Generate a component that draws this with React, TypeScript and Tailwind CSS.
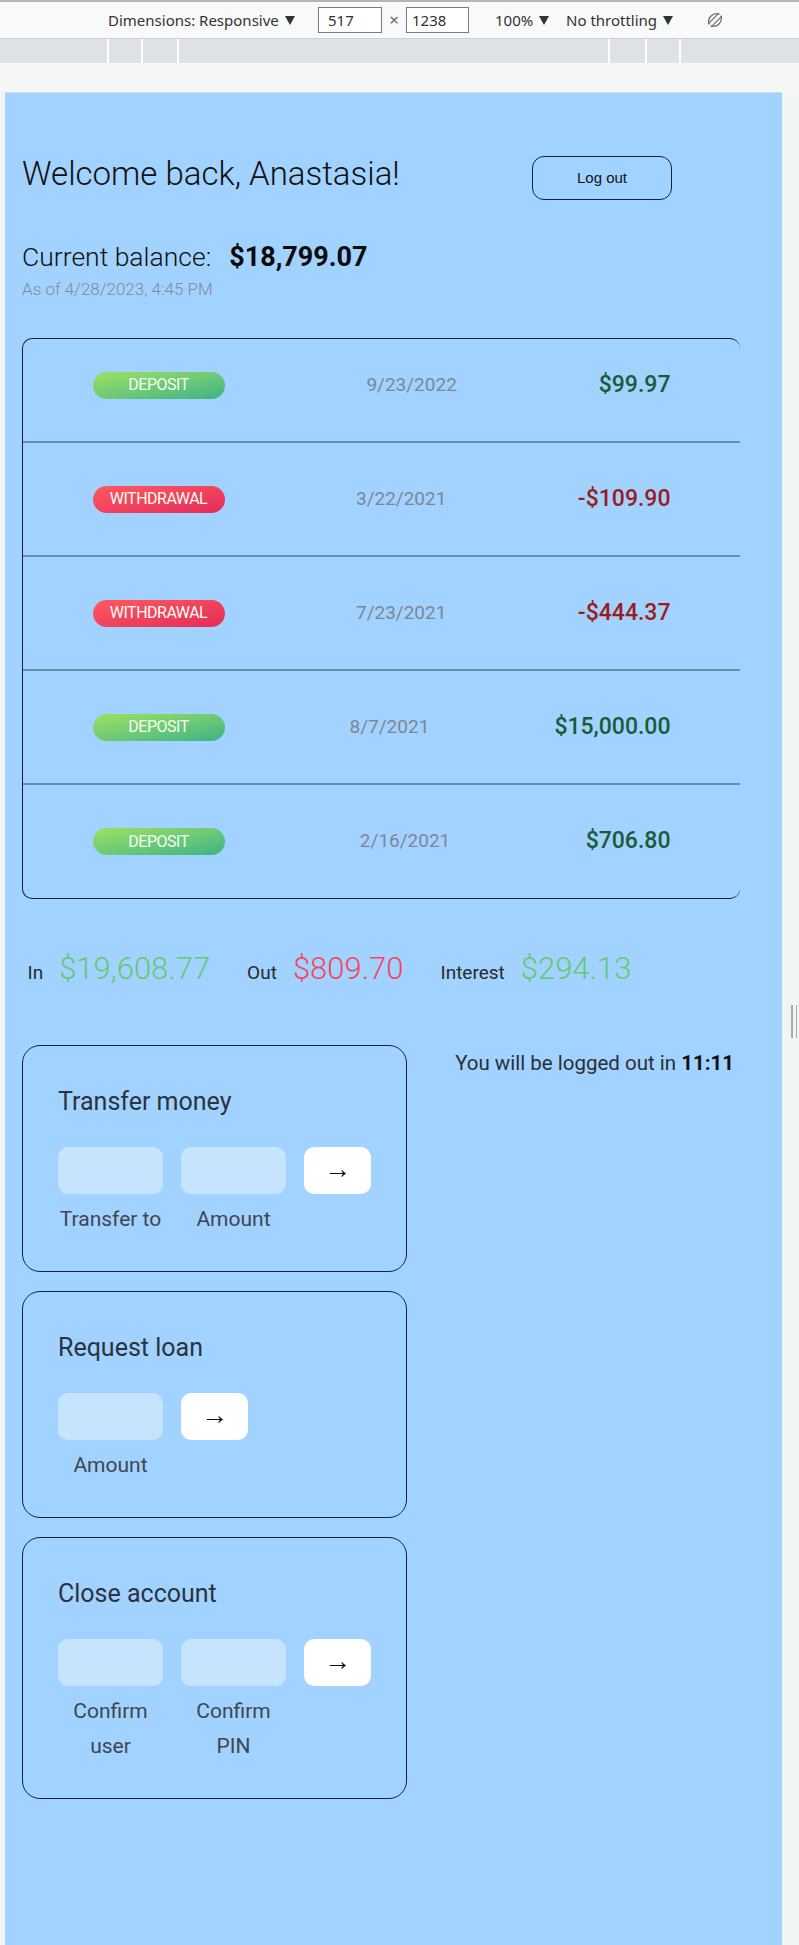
import React from "react";

type Mov = { type: "deposit" | "withdrawal"; date: string; value: string };

const movements: Mov[] = [
  { type: "deposit", date: "9/23/2022", value: "$99.97" },
  { type: "withdrawal", date: "3/22/2021", value: "-$109.90" },
  { type: "withdrawal", date: "7/23/2021", value: "-$444.37" },
  { type: "deposit", date: "8/7/2021", value: "$15,000.00" },
  { type: "deposit", date: "2/16/2021", value: "$706.80" },
];

function Tri() {
  return (
    <svg width="10" height="9" viewBox="0 0 10 9" className="shrink-0">
      <polygon points="0,0 10,0 5,9" fill="#333" />
    </svg>
  );
}

function Toolbar() {
  return (
    <div className="h-[36px] bg-[#f8f9f9] flex items-center text-[15px] text-[#333] font-['Noto_Sans',sans-serif]">
      <div className="w-[108px] shrink-0" />
      <div className="w-[210px] shrink-0 flex items-center">
        <span>Dimensions: Responsive</span>
        <span className="ml-[6px] flex items-center">
          <Tri />
        </span>
      </div>
      <div className="w-[64px] h-[26px] shrink-0 border border-[#7a7a7a] bg-white flex items-center pl-[9px]">517</div>
      <div className="w-[24px] shrink-0 flex justify-center text-[#666] text-[17px]">×</div>
      <div className="w-[63px] h-[26px] shrink-0 border border-[#7a7a7a] bg-white flex items-center pl-[5px]">1238</div>
      <div className="w-[26px] shrink-0" />
      <div className="w-[71px] shrink-0 flex items-center">
        <span>100%</span>
        <span className="ml-[6px] flex items-center">
          <Tri />
        </span>
      </div>
      <div className="w-[139px] shrink-0 flex items-center">
        <span>No throttling</span>
        <span className="ml-[6px] flex items-center">
          <Tri />
        </span>
      </div>
      <svg width="20" height="20" viewBox="0 0 20 20" fill="none" stroke="#6b6b6b" strokeWidth="1.2">
        <path d="M4.2 14.5 A8 8 0 0 1 14.5 4.2" />
        <path d="M15.8 5.5 A8 8 0 0 1 5.5 15.8" />
        <path d="M3.2 13.8 L13.8 3.2" />
        <path d="M6.2 16.8 L16.8 6.2" />
      </svg>
    </div>
  );
}

function Ruler() {
  return (
    <div className="h-[24px] bg-[#dee1e5] flex">
      <div className="w-[107px] shrink-0" />
      <div className="w-[2px] bg-white shrink-0" />
      <div className="w-[32px] shrink-0" />
      <div className="w-[2px] bg-white shrink-0" />
      <div className="w-[34px] shrink-0" />
      <div className="w-[2px] bg-white shrink-0" />
      <div className="w-[429px] shrink-0" />
      <div className="w-[2px] bg-white shrink-0" />
      <div className="w-[35px] shrink-0" />
      <div className="w-[2px] bg-white shrink-0" />
      <div className="w-[32px] shrink-0" />
      <div className="w-[2px] bg-white shrink-0" />
    </div>
  );
}

function Badge({ type }: { type: Mov["type"] }) {
  const cls =
    type === "deposit"
      ? "bg-linear-to-tl from-[#39b385] to-[#9be15d]"
      : "bg-linear-to-tl from-[#e52a5a] to-[#ff585f]";
  return (
    <div
      className={`w-[132px] h-[27px] rounded-full flex items-center justify-center text-[#f4fff4] text-[16px] tracking-[-0.5px] uppercase ${cls}`}
    >
      {type}
    </div>
  );
}

function Card({
  title,
  cols,
  children,
}: {
  title: string;
  cols: "transfer" | "loan";
  children: React.ReactNode;
}) {
  return (
    <div className="border-[1.5px] border-[#18212f] rounded-[18px] pt-[41px] pb-[34px] pl-[35px]">
      <h2 className="text-[25px] leading-[30px] text-[#2b3340] mb-[30px]">{title}</h2>
      <div
        className={`grid gap-x-[18px] gap-y-[8px] ${
          cols === "transfer" ? "grid-cols-[105px_105px_67px]" : "grid-cols-[105px_67px_105px]"
        }`}
      >
        {children}
      </div>
    </div>
  );
}

function Input() {
  return <div className="h-[47px] rounded-[10px] bg-white/40" />;
}

function Btn() {
  return (
    <div className="h-[47px] rounded-[10px] bg-white flex items-center justify-center text-[27px] text-[#111] leading-none pb-[3px]">
      →
    </div>
  );
}

function Label({ children, nowrap }: { children: React.ReactNode; nowrap?: boolean }) {
  return (
    <div className={`text-[21px] leading-[35px] text-center text-[#3f4650] ${nowrap ? "whitespace-nowrap" : ""}`}>
      {children}
    </div>
  );
}

export default function App() {
  return (
    <div className="relative w-[799px] h-[1945px] overflow-hidden bg-[#f3f4f5] font-['Roboto',sans-serif]">
      <div className="h-[2px] bg-[#b4b5b7]" />
      <Toolbar />
      <div className="h-[1px] bg-[#cfd1d4]" />
      <Ruler />
      <div className="h-[29px] bg-[#f5f6f6]" />
      <div className="ml-[5px] w-[777px] h-[1853px] bg-[#a2d2ff] pl-[17px] border-t border-[#d5dbe2]">
        {/* header */}
        <div className="flex items-start pt-[61px]">
          <h1 className="w-[510px] shrink-0 text-[33px] leading-[40px] font-light text-[#111]">
            Welcome back, Anastasia!
          </h1>
          <button className="mt-[2px] w-[140px] h-[44px] rounded-[12px] border-[1.5px] border-[#18212f] text-[15px] text-[#111] font-['Liberation_Sans',Arial,sans-serif]">
            Log out
          </button>
        </div>

        {/* balance */}
        <div className="mt-[40px] flex items-baseline">
          <span className="text-[26.5px] leading-[34px] font-light text-[#111]">Current balance:</span>
          <span className="ml-[18px] text-[27px] leading-[34px] font-bold text-[#0b0b0b]">$18,799.07</span>
        </div>
        <div className="mt-[4px] text-[17px] leading-[22px] font-light text-[#858b93]">
          As of 4/28/2023, 4:45 PM
        </div>

        {/* movements */}
        <div className="mt-[37.5px] w-[718px] border-[1.5px] border-r-0 border-[#18212f] rounded-[10px] overflow-hidden">
          {movements.map((m, i) => {
            const last = i === movements.length - 1;
            return (
              <div
                key={i}
                className={`flex items-center justify-between pl-[69.5px] pr-[69.5px] ${
                  last ? "h-[113px]" : "h-[114px] border-b-2 border-[#6c8cab]"
                } ${i === 0 ? "-mt-[9.5px]" : ""}`}
              >
                <Badge type={m.type} />
                <div className="text-[19px] text-[#7d8794]">{m.date}</div>
                <div
                  className={`text-[23px] font-medium ${
                    m.type === "deposit" ? "text-[#1c5a3c]" : "text-[#9b1c1f]"
                  }`}
                >
                  {m.value}
                </div>
              </div>
            );
          })}
        </div>

        {/* summary */}
        <div className="mt-[50px] pl-[5.5px] flex items-baseline h-[40px]">
          <span className="text-[19px] text-[#2a2a2a] mr-[16px]">In</span>
          <span className="text-[31px] leading-[40px] font-light text-[#66c873] mr-[37px]">$19,608.77</span>
          <span className="text-[19px] text-[#2a2a2a] mr-[16px]">Out</span>
          <span className="text-[31px] leading-[40px] font-light text-[#f5465d] mr-[37px]">$809.70</span>
          <span className="text-[19px] text-[#2a2a2a] mr-[16px]">Interest</span>
          <span className="text-[31px] leading-[40px] font-light text-[#66c873]">$294.13</span>
        </div>

        {/* operations + timer */}
        <div className="mt-[56px] flex">
          <div className="w-[385px] shrink-0 flex flex-col gap-[19px]">
            <Card title="Transfer money" cols="transfer">
              <Input />
              <Input />
              <Btn />
              <Label nowrap>Transfer to</Label>
              <Label nowrap>Amount</Label>
            </Card>
            <Card title="Request loan" cols="loan">
              <Input />
              <Btn />
              <div />
              <Label nowrap>Amount</Label>
            </Card>
            <Card title="Close account" cols="transfer">
              <Input />
              <Input />
              <Btn />
              <Label>Confirm user</Label>
              <Label>Confirm PIN</Label>
            </Card>
          </div>
          <div className="flex-1 text-right pr-[48px] mt-[3px] text-[20.5px] leading-[30px] text-[#2b2f36]">
            You will be logged out in <span className="font-bold text-[#111]">11:11</span>
          </div>
        </div>
      </div>

      {/* devtools resize handle */}
      <div className="absolute left-[791px] top-[1005px] h-[33px] flex gap-[3px]">
        <div className="w-[1.5px] h-full bg-[#a9abae]" />
        <div className="w-[1.5px] h-full bg-[#a9abae]" />
      </div>
    </div>
  );
}
